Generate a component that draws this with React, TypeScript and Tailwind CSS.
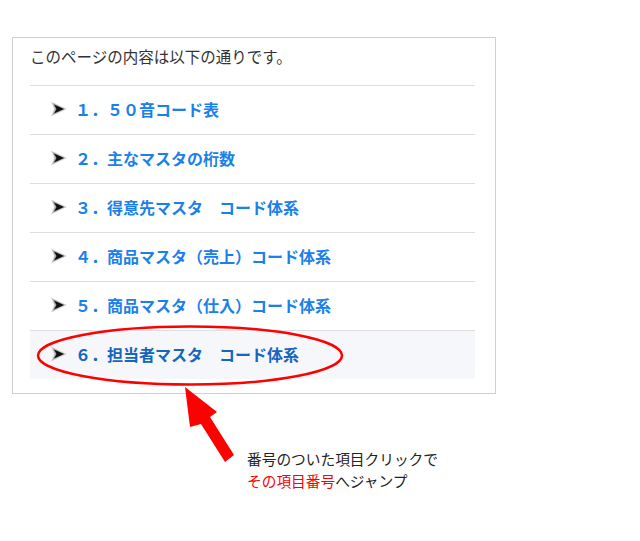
import React from 'react';

const items = [
  '１．５０音コード表',
  '２．主なマスタの桁数',
  '３．得意先マスタ　コード体系',
  '４．商品マスタ（売上）コード体系',
  '５．商品マスタ（仕入）コード体系',
  '６．担当者マスタ　コード体系',
];

const Bullet: React.FC = () => (
  <svg width="16" height="16" viewBox="0 0 16 16" className="shrink-0">
    <path d="M0 0.5 L16 8 L0 15.5 L3 8 Z" fill="#d4d4d4" />
    <path d="M1.5 2 L14 8 L1.5 14 L4 8 Z" fill="#a8a8a8" />
    <path d="M3 3.5 L13 8 L3 12.5 L5.5 8 Z" fill="#111" />
  </svg>
);

const App: React.FC = () => {
  return (
    <div
      className="relative w-[640px] h-[541px] bg-white pl-[12px] pt-[37px]"
      style={{ fontFamily: '"Noto Sans CJK JP", "Noto Sans", sans-serif' }}
    >
      <div className="w-[484px] border border-[#cfcfcf] pl-[17px] pr-[20px] pt-[7px] pb-[14px]">
        <p className="text-[15.5px] leading-[22px] text-[#333] mb-[18px]">このページの内容は以下の通りです。</p>
        <ul>
          {items.map((item, i) => (
            <li
              key={item}
              className={`h-[49px] border-t border-[#dedede] flex items-center pl-[21px] pb-[3px] gap-[8px] ${
                i === 5 ? 'bg-[#f5f7fa]' : ''
              }`}
            >
              <Bullet />
              <span
                className={`text-[16px] font-bold leading-none ${
                  i === 5 ? 'text-[#1766bd]' : 'text-[#1a80ea]'
                }`}
              >
                {item}
              </span>
            </li>
          ))}
        </ul>
      </div>

      <div className="pl-[235px] pt-[54px] text-[14.7px] leading-[22px] text-[#222]">
        <p>番号のついた項目クリックで</p>
        <p>
          <span className="text-[#ff0000]">その項目番号</span>へジャンプ
        </p>
      </div>

      <svg className="absolute left-0 top-0 pointer-events-none" width="640" height="541">
        <ellipse cx="190" cy="355.5" rx="152" ry="29" fill="none" stroke="#ff0000" strokeWidth="2.5" />
        <polygon points="185,387 217,412 210,417 234,455 225,462 201,424 190,427" fill="#ff0000" />
      </svg>
    </div>
  );
};

export default App;
